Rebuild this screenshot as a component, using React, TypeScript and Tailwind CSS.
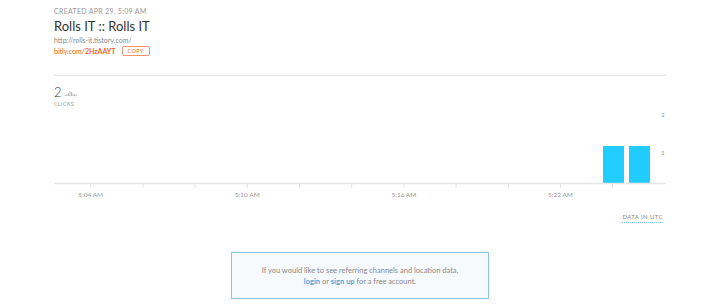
const ticks = [36.7, 88.9, 141.1, 193.3, 245.5, 297.7, 349.9, 402.1, 454.3, 506.5, 558.7];
const tickLabels: Record<number, string> = { 0: "5:04 AM", 3: "5:10 AM", 6: "5:16 AM", 9: "5:22 AM" };

function Sparkline() {
  return (
    <svg width="13" height="6" viewBox="0 0 13 6" className="ml-[2px] mb-[1px]">
      <path d="M0 6 H13" stroke="#bbb" strokeWidth="0.8" />
      {[
        [1, 5], [2.5, 4], [4, 3], [5.5, 1], [7, 2], [8.5, 3.5], [10, 4], [11.5, 4.5],
      ].map(([x, y], i) => (
        <rect key={i} x={x} y={y} width="0.9" height={6 - y} fill="#bbb" />
      ))}
    </svg>
  );
}

function ClicksChart() {
  return (
    <svg width="612" height="92" viewBox="0 0 612 92" className="block">
      <rect x="549" y="38" width="21" height="37" fill="#22ccff" />
      <rect x="575" y="38" width="21" height="37" fill="#22ccff" />
      <line x1="0" y1="75.5" x2="612" y2="75.5" stroke="#e6e6e6" strokeWidth="1.5" />
      {ticks.map((x, i) => (
        <g key={i}>
          <line x1={x} y1="75" x2={x} y2="80" stroke="#e3e3e3" strokeWidth="1" />
          {tickLabels[i] && (
            <text x={x} y="89" textAnchor="middle" fontSize="6.5" fill="#999">
              {tickLabels[i]}
            </text>
          )}
        </g>
      ))}
      <text x="609" y="8.5" textAnchor="middle" fontSize="6.5" fill="#999">2</text>
      <text x="609" y="46.5" textAnchor="middle" fontSize="6.5" fill="#999">1</text>
    </svg>
  );
}

function App() {
  return (
    <div className="w-[720px] h-[308px] bg-white overflow-hidden font-['Lato',sans-serif]">
      <div className="ml-[54px] w-[612px] pt-[7px]">
        <p className="text-[7px] leading-[8px] tracking-[0.3px] text-[#999] uppercase">
          Created Apr 29, 5:09 AM
        </p>
        <p className="mt-[3px] text-[13px] leading-[16px] text-[#333]">Rolls IT :: Rolls IT</p>
        <p className="mt-[2px] text-[7px] leading-[9px] text-[#888]">http://rolls-it.tistory.com/</p>
        <div className="mt-[1px] flex items-center gap-[6px]">
          <span className="text-[7px] leading-[10px] text-[#ee6123]">
            bitly.com/<span className="font-bold">2HzAAYT</span>
          </span>
          <button className="w-[28px] h-[10px] border border-[#f0926a] rounded-[2px] text-[5.5px] leading-[8px] text-[#ee6123] tracking-[0.3px]">
            COPY
          </button>
        </div>
        <div className="mt-[19px] h-px bg-[#e6e6e6]" />
        <div className="mt-[11px] flex items-end">
          <span className="text-[13px] leading-[10px] text-[#333] font-light">2</span>
          <Sparkline />
        </div>
        <p className="mt-[4px] text-[5.5px] leading-[7px] tracking-[0.3px] text-[#999]">CLICKS</p>
        <ClicksChart />
        <div className="mt-[13px] flex justify-end pr-[3px]">
          <span className="text-[6px] leading-[8px] tracking-[0.4px] text-[#888] pb-[1px] border-b border-dotted border-[#7fc4e6]">
            DATA IN UTC
          </span>
        </div>
      </div>
      <div className="mx-auto mt-[29px] w-[258px] h-[47px] border border-[#86c5e3] bg-[#f6fafd] flex flex-col items-center justify-center text-[7.5px] leading-[11px] text-[#888]">
        <p>If you would like to see referring channels and location data,</p>
        <p>
          <span className="text-[#4aa9d6] font-bold">login</span> or{" "}
          <span className="text-[#4aa9d6] font-bold">sign up</span> for a free account.
        </p>
      </div>
    </div>
  );
}

export default App;
